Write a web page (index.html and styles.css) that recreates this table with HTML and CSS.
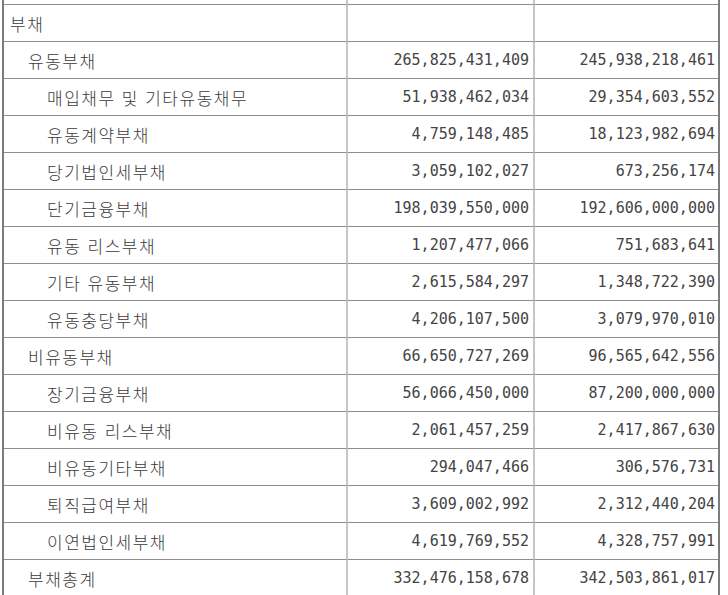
FILE: index.html
```html
<!DOCTYPE html>
<html lang="ko">
<head>
<meta charset="utf-8">
<link rel="stylesheet" href="styles.css">
</head>
<body>
<table class="sheet">
  <colgroup><col class="c-name"><col class="c-num"><col class="c-num2"></colgroup>
  <tr class="stub"><td class="name"></td><td class="num"></td><td class="num last"></td></tr>
  <tr><td class="name l0">부채</td><td class="num"></td><td class="num last"></td></tr>
  <tr><td class="name l1">유동부채</td><td class="num">265,825,431,409</td><td class="num last">245,938,218,461</td></tr>
  <tr><td class="name l2">매입채무 및 기타유동채무</td><td class="num">51,938,462,034</td><td class="num last">29,354,603,552</td></tr>
  <tr><td class="name l2">유동계약부채</td><td class="num">4,759,148,485</td><td class="num last">18,123,982,694</td></tr>
  <tr><td class="name l2">당기법인세부채</td><td class="num">3,059,102,027</td><td class="num last">673,256,174</td></tr>
  <tr><td class="name l2">단기금융부채</td><td class="num">198,039,550,000</td><td class="num last">192,606,000,000</td></tr>
  <tr><td class="name l2">유동 리스부채</td><td class="num">1,207,477,066</td><td class="num last">751,683,641</td></tr>
  <tr><td class="name l2">기타 유동부채</td><td class="num">2,615,584,297</td><td class="num last">1,348,722,390</td></tr>
  <tr><td class="name l2">유동충당부채</td><td class="num">4,206,107,500</td><td class="num last">3,079,970,010</td></tr>
  <tr><td class="name l1">비유동부채</td><td class="num">66,650,727,269</td><td class="num last">96,565,642,556</td></tr>
  <tr><td class="name l2">장기금융부채</td><td class="num">56,066,450,000</td><td class="num last">87,200,000,000</td></tr>
  <tr><td class="name l2">비유동 리스부채</td><td class="num">2,061,457,259</td><td class="num last">2,417,867,630</td></tr>
  <tr><td class="name l2">비유동기타부채</td><td class="num">294,047,466</td><td class="num last">306,576,731</td></tr>
  <tr><td class="name l2">퇴직급여부채</td><td class="num">3,609,002,992</td><td class="num last">2,312,440,204</td></tr>
  <tr><td class="name l2">이연법인세부채</td><td class="num">4,619,769,552</td><td class="num last">4,328,757,991</td></tr>
  <tr><td class="name l1">부채총계</td><td class="num">332,476,158,678</td><td class="num last">342,503,861,017</td></tr>
</table>
</body>
</html>
```

FILE: styles.css
```css
html, body {
  margin: 0;
  padding: 0;
  background: #ffffff;
}
body {
  overflow: hidden;
}
.sheet {
  margin-left: 2px;
  border-collapse: separate;
  border-spacing: 0;
  table-layout: fixed;
  width: 718px;
  border-left: 2px solid #7c7c7c;
  border-right: 2px solid #7c7c7c;
  color: #3a3a3a;
}
.c-name { width: 344px; }
.c-num { width: 187px; }
.c-num2 { width: 183px; }
.sheet td {
  height: 36px;
  padding: 0;
  border-bottom: 1px solid #8e8e8e;
  white-space: nowrap;
  vertical-align: middle;
  box-sizing: content-box;
}
.sheet tr.stub td {
  height: 4px;
}
.name {
  font-family: "Noto Sans CJK KR", "DejaVu Sans", sans-serif;
  font-size: 17px;
  font-weight: 300;
  letter-spacing: 1.5px;
  border-right: 2px solid #c6c6c6;
}
.num {
  font-family: "DejaVu Sans Mono", "Liberation Mono", monospace;
  font-size: 15px;
  text-align: right;
  color: #444444;
  padding-right: 4px !important;
  border-right: 2px solid #c6c6c6;
}
.num.last {
  border-right: none;
  padding-right: 3px !important;
}
.l0 { padding-left: 6px !important; }
.l1 { padding-left: 24px !important; }
.l2 { padding-left: 43px !important; }
```
